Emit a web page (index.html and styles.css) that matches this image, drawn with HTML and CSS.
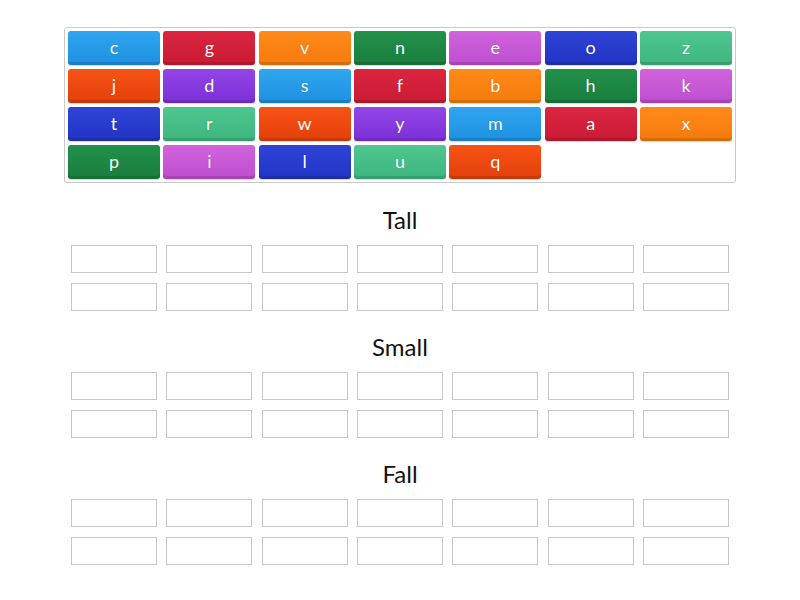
FILE: index.html
```html
<!DOCTYPE html>
<html>
<head>
<meta charset="utf-8">
<link rel="stylesheet" href="styles.css">
</head>
<body>
<div class="bank">
  <div class="tile blue">c</div>
  <div class="tile red">g</div>
  <div class="tile orange">v</div>
  <div class="tile green">n</div>
  <div class="tile pink">e</div>
  <div class="tile navy">o</div>
  <div class="tile mint">z</div>
  <div class="tile redorange">j</div>
  <div class="tile purple">d</div>
  <div class="tile blue">s</div>
  <div class="tile red">f</div>
  <div class="tile orange">b</div>
  <div class="tile green">h</div>
  <div class="tile pink">k</div>
  <div class="tile navy">t</div>
  <div class="tile mint">r</div>
  <div class="tile redorange">w</div>
  <div class="tile purple">y</div>
  <div class="tile blue">m</div>
  <div class="tile red">a</div>
  <div class="tile orange">x</div>
  <div class="tile green">p</div>
  <div class="tile pink">i</div>
  <div class="tile navy">l</div>
  <div class="tile mint">u</div>
  <div class="tile redorange">q</div>
</div>

<div class="group first">
  <div class="title">Tall</div>
  <div class="slots">
    <div class="slot"></div><div class="slot"></div><div class="slot"></div><div class="slot"></div><div class="slot"></div><div class="slot"></div><div class="slot"></div>
    <div class="slot"></div><div class="slot"></div><div class="slot"></div><div class="slot"></div><div class="slot"></div><div class="slot"></div><div class="slot"></div>
  </div>
</div>
<div class="group">
  <div class="title">Small</div>
  <div class="slots">
    <div class="slot"></div><div class="slot"></div><div class="slot"></div><div class="slot"></div><div class="slot"></div><div class="slot"></div><div class="slot"></div>
    <div class="slot"></div><div class="slot"></div><div class="slot"></div><div class="slot"></div><div class="slot"></div><div class="slot"></div><div class="slot"></div>
  </div>
</div>
<div class="group">
  <div class="title">Fall</div>
  <div class="slots">
    <div class="slot"></div><div class="slot"></div><div class="slot"></div><div class="slot"></div><div class="slot"></div><div class="slot"></div><div class="slot"></div>
    <div class="slot"></div><div class="slot"></div><div class="slot"></div><div class="slot"></div><div class="slot"></div><div class="slot"></div><div class="slot"></div>
  </div>
</div>
</body>
</html>
```

FILE: styles.css
```css
html, body {
  margin: 0;
  padding: 0;
  background: #ffffff;
}
body {
  font-family: "Lato", "Open Sans", sans-serif;
  color: #111;
}
.bank {
  box-sizing: border-box;
  width: 672px;
  margin: 27px auto 0;
  border: 1px solid #c9c9c9;
  border-radius: 3px;
  padding: 3px;
  display: grid;
  grid-template-columns: repeat(7, 92px);
  grid-auto-rows: 34px;
  column-gap: 3.33px;
  row-gap: 4px;
}
.tile {
  border-radius: 3px;
  color: #fff;
  font-size: 18px;
  display: flex;
  align-items: center;
  justify-content: center;
  padding-bottom: 2px;
  box-sizing: border-box;
  text-shadow: 0 0 1px rgba(0,0,0,0.25);
  box-shadow: inset 0 -3px 0 rgba(0,0,0,0.12), 0 1px 1px rgba(0,0,0,0.15);
}
.blue { background: linear-gradient(#2fa6ef, #1e8fe0); }
.red { background: linear-gradient(#dc2640, #c91a34); }
.orange { background: linear-gradient(#ff8a1a, #f57a0c); }
.green { background: linear-gradient(#22914a, #1a7d3e); }
.pink { background: linear-gradient(#d164dc, #bd4dcf); }
.navy { background: linear-gradient(#2f43d6, #2134c4); }
.mint { background: linear-gradient(#4fc690, #3eb47f); }
.redorange { background: linear-gradient(#f85316, #e2400b); }
.purple { background: linear-gradient(#9345e6, #7b2fd8); }

.group {
  width: 658px;
  margin: 0 auto;
}
.group.first {
  margin-top: 1px;
}
.title {
  font-size: 24px;
  line-height: 30px;
  text-align: center;
  padding-top: 21px;
  margin-bottom: 10px;
}
.slots {
  display: grid;
  grid-template-columns: repeat(7, 86px);
  grid-auto-rows: 28px;
  column-gap: 9.33px;
  row-gap: 10px;
}
.slot {
  box-sizing: border-box;
  border: 1px solid #c6c6c6;
  background: #fff;
}
```
